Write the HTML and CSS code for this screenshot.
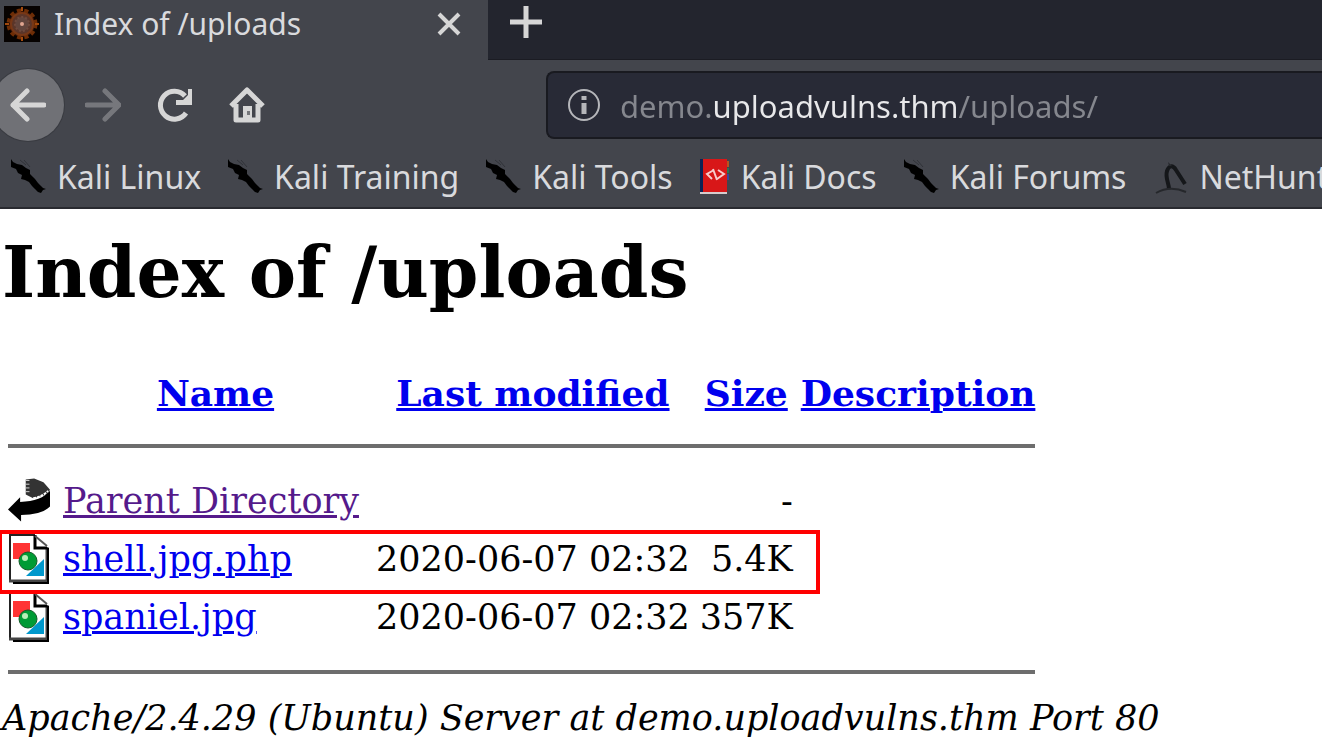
FILE: index.html
```html
<!DOCTYPE html>
<html lang="en">
<head>
    <meta charset="UTF-8">
    <meta name="viewport" content="width=device-width, initial-scale=1.0">
    <title>Index of /uploads</title>
    <link rel="stylesheet" href="styles.css">
</head>
<body>
    <!-- Shared icons -->
    <svg class="sprite" aria-hidden="true">
        <symbol id="dragon" viewBox="0 0 36 36">
            <path d="M1 0L3 3L7 5L12 6L16 9L20 11L20 15L23 18L25 20L28 24L31 27L33 29L36 30L33 31L31 34L28 33L25 30L22 27L19 23L15 21L11 20L12 16L8 14L6 10L1 8Z"/>
            <path d="M10 1L16 6M14 1L20 8" fill="none" stroke="#303238" stroke-width="1"/>
        </symbol>
        <symbol id="image-file" viewBox="0 0 42 50">
            <path d="M2 1 H27 L40 13 V48 H2Z" fill="#fff"/>
            <path d="M27 1 H2 V46" fill="none" stroke="#222" stroke-width="2"/>
            <path d="M1 47 H39 V13" fill="none" stroke="#444" stroke-width="3"/>
            <path d="M5 49 H40 V14" fill="none" stroke="#000" stroke-width="2"/>
            <path d="M27 1 V14 H39" fill="none" stroke="#000" stroke-width="3"/>
            <path d="M27 2 L39 12" fill="none" stroke="#555" stroke-width="2"/>
            <rect x="5" y="9" width="17" height="16" fill="#ff3434"/>
            <path d="M36 25 V42 H18Z" fill="#0098cc"/>
            <circle cx="20" cy="27" r="9" fill="#009b35" stroke="#155b2a" stroke-width="1"/>
            <circle cx="17" cy="24" r="3" fill="#b8eeb8"/>
        </symbol>
    </svg>

    <header class="browser">
        <div class="tab-bar">
            <div class="tab">
                <svg class="favicon" viewBox="0 0 36 36" aria-hidden="true">
                    <rect width="36" height="36" fill="#060201"/>
                    <circle cx="18" cy="18" r="13" fill="#3b1608" stroke="#6e2d06" stroke-width="5" stroke-dasharray="4 3"/>
                    <circle cx="18" cy="18" r="11" fill="#5a3529" stroke="#783817" stroke-width="2"/>
                    <circle cx="18" cy="18" r="7" fill="#62453d" stroke="#704a3d" stroke-width="2" stroke-dasharray="2 2"/>
                    <path d="M18 1v4M18 31v4M1 18h4M31 18h4" stroke="#a34a0d" stroke-width="2"/>
                    <circle cx="18" cy="18" r="2" fill="#e0a590"/>
                </svg>
                <span class="tab-title">Index of /uploads</span>
                <button class="tab-button" aria-label="Close tab">
                    <svg viewBox="0 0 24 24" width="24" height="24"><path d="M2 2L22 22M22 2L2 22" stroke-width="4"/></svg>
                </button>
            </div>
            <button class="tab-button new-tab" aria-label="New tab">
                <svg viewBox="0 0 32 32" width="32" height="32"><path d="M16 0V32M0 16H32" stroke-width="5"/></svg>
            </button>
        </div>

        <div class="nav-bar">
            <div class="nav-buttons">
                <button class="nav-button back" aria-label="Back">
                    <svg viewBox="0 0 36 36" width="36" height="36"><path d="M34 18H3M17 4L3 18L17 32" stroke-width="5" stroke-linecap="round" stroke-linejoin="round"/></svg>
                </button>
                <button class="nav-button forward" aria-label="Forward" disabled>
                    <svg viewBox="0 0 36 36" width="36" height="36"><path d="M2 18H34M20 4L34 18L20 32" stroke-width="5" stroke-linecap="round" stroke-linejoin="round"/></svg>
                </button>
                <button class="nav-button reload" aria-label="Reload">
                    <svg viewBox="0 0 36 36" width="36" height="36"><path d="M29 26A14 14 0 1 1 28 9" stroke-width="5"/><path d="M31 2H35V18H19V13H26L31 8Z" fill="#d6d6d6" stroke="none"/></svg>
                </button>
                <button class="nav-button home" aria-label="Home">
                    <svg viewBox="0 0 36 36" width="36" height="36"><path d="M2 19L18 3L34 19M7 17V33H29V17" stroke-width="5" stroke-linejoin="round"/><path d="M14 19H23V33H14Z" fill="#d6d6d6" stroke="none"/><rect x="18" y="24" width="3" height="4" fill="#75767a" stroke="none"/></svg>
                </button>
            </div>
            <div class="url-bar">
                <svg class="info" viewBox="0 0 32 32" aria-hidden="true">
                    <circle cx="16" cy="16" r="15" fill="none" stroke="#b5b6ba" stroke-width="2"/>
                    <path d="M16 7V11M16 14V25" stroke="#b5b6ba" stroke-width="5"/>
                </svg>
                <input class="url" type="text" aria-label="Address" value="demo.uploadvulns.thm/uploads/">
            </div>
        </div>

        <nav class="bookmarks">
            <a href="#"><svg class="bookmark-icon"><use href="#dragon"/></svg>Kali Linux</a>
            <a href="#"><svg class="bookmark-icon"><use href="#dragon"/></svg>Kali Training</a>
            <a href="#"><svg class="bookmark-icon"><use href="#dragon"/></svg>Kali Tools</a>
            <a href="#"><svg class="bookmark-icon docs" viewBox="0 0 29 36">
                <rect width="4" height="33" fill="#0b2355"/>
                <rect x="3" width="24" height="33" fill="#d81718"/>
                <path d="M27 2h2v6h-2z" fill="#b65420"/><path d="M27 9h2v5h-2z" fill="#277654"/><path d="M27 15h2v6h-2z" fill="#39479a"/>
                <rect y="33" width="27" height="2" fill="#d6cccd"/>
                <path d="M14 11L7 15L12 20M13 10L17 21M18 11L24 15L17 20" fill="none" stroke="#f8cccc" stroke-width="2"/>
            </svg>Kali Docs</a>
            <a href="#"><svg class="bookmark-icon"><use href="#dragon"/></svg>Kali Forums</a>
            <a href="#"><svg class="bookmark-icon nethunter" viewBox="0 0 36 36">
                <path d="M17 30C17 24 13 19 15 12C17 6 21 6 24 11L33 25" fill="none" stroke="#15171a" stroke-width="4"/>
                <path d="M4 34Q18 26 34 33" fill="none" stroke="#25272b" stroke-width="2"/>
                <path d="M17 7L16 3L20 7" fill="#25272b"/>
            </svg>NetHunter</a>
        </nav>
    </header>

    <main class="listing">
        <h1>Index of /uploads</h1>
        <table>
            <thead>
                <tr>
                    <th class="icon-cell"></th>
                    <th class="name"><a href="#">Name</a></th>
                    <th><a href="#">Last modified</a></th>
                    <th class="size-head"><a href="#">Size</a></th>
                    <th><a href="#">Description</a></th>
                </tr>
            </thead>
            <tbody>
                <tr class="rule"><td colspan="5"><hr></td></tr>
                <tr>
                    <td class="icon-cell">
                        <svg class="file-icon" viewBox="0 0 45 50" role="img" aria-label="Parent directory">
                            <path d="M19 2L28 1L38 5L45 13L42 18L27 22L19 18Z" fill="#333"/>
                            <path d="M19 3h4M19 7h4M19 11h4M19 15h4" stroke="#ddd" stroke-width="1"/>
                            <path d="M27 22Q38 20 43 14" fill="none" stroke="#fff" stroke-width="2" stroke-dasharray="3 1"/>
                            <path d="M0 34L13 21V26Q36 25 45 14V31Q36 40 14 40V47Z" fill="#000"/>
                        </svg>
                    </td>
                    <td><a class="visited" href="#">Parent Directory</a></td>
                    <td></td>
                    <td class="size">-</td>
                    <td></td>
                </tr>
                <tr class="highlight">
                    <td class="icon-cell"><svg class="file-icon"><use href="#image-file"/></svg></td>
                    <td><a href="#">shell.jpg.php</a></td>
                    <td class="date">2020-06-07 02:32</td>
                    <td class="size">5.4K</td>
                    <td></td>
                </tr>
                <tr>
                    <td class="icon-cell"><svg class="file-icon"><use href="#image-file"/></svg></td>
                    <td><a href="#">spaniel.jpg</a></td>
                    <td class="date">2020-06-07 02:32</td>
                    <td class="size">357K</td>
                    <td></td>
                </tr>
                <tr class="rule"><td colspan="5"><hr></td></tr>
            </tbody>
        </table>
        <address>Apache/2.4.29 (Ubuntu) Server at demo.uploadvulns.thm Port 80</address>
    </main>
</body>
</html>
```
FILE: styles.css
```css
* {
    box-sizing: border-box;
}
body {
    margin: 0;
    background: #fff;
    color: #000;
    overflow-x: hidden;
}
button {
    padding: 0;
    border: none;
    background: none;
}
svg {
    display: block;
    flex-shrink: 0;
}
.sprite {
    position: absolute;
    width: 0;
    height: 0;
}

/* Browser chrome */
.browser {
    background: #43454c;
    color: #d9dadd;
    font-family: "Noto Sans", sans-serif;
    font-size: 32px;
    border-bottom: 2px solid #292a30;
}
.tab-bar {
    display: flex;
    height: 60px;
    background: #23252e;
    border-bottom: 1px solid #1b1c23;
}
.tab {
    display: flex;
    align-items: center;
    width: 488px;
    height: 60px;
    padding: 0 27px 12px 4px;
    background: #43454c;
}
.favicon {
    width: 36px;
    height: 36px;
    margin-right: 14px;
}
.tab-title {
    flex: 1;
    font-size: 30px;
    line-height: 48px;
    white-space: nowrap;
}
.tab-button svg,
.nav-button svg {
    fill: none;
    stroke: #d6d6d6;
}
.new-tab {
    height: 44px;
    margin-left: 22px;
}
.nav-bar {
    display: flex;
    align-items: center;
    height: 90px;
}
.nav-buttons {
    display: flex;
    align-items: center;
    flex-shrink: 0;
    width: 546px;
    gap: 36px;
}
.back {
    display: flex;
    align-items: center;
    justify-content: center;
    width: 72px;
    height: 72px;
    margin: 0 -15px 0 -8px;
    border-radius: 50%;
    background: #707176;
    box-shadow: 0 0 0 1px #393b41;
}
.forward {
    opacity: 0.35;
}
.url-bar {
    display: flex;
    align-items: center;
    flex: 1;
    height: 68px;
    padding-left: 20px;
    gap: 20px;
    background: #282a36;
    border: 2px solid #191a20;
    border-right: none;
    border-radius: 8px 0 0 8px;
}
.info {
    width: 32px;
    height: 32px;
}
.url {
    flex: 1;
    min-width: 0;
    padding: 2px 0 0;
    border: none;
    outline: none;
    font: inherit;
    font-size: 31px;
    /* dim the subdomain and the path, keep the domain bright */
    background: linear-gradient(90deg, #85878e 92px, #e8e8ea 92px, #e8e8ea 337px, #85878e 337px);
    background-clip: text;
    -webkit-background-clip: text;
    color: transparent;
}
.bookmarks {
    display: flex;
    height: 57px;
    padding: 0 0 4px 10px;
    gap: 26px;
    overflow: hidden;
    white-space: nowrap;
}
.bookmarks a {
    display: flex;
    align-items: center;
    gap: 11px;
    color: inherit;
    text-decoration: none;
}
.bookmark-icon {
    width: 36px;
    height: 36px;
}
.docs {
    width: 31px;
}

/* Directory listing */
.listing {
    font-family: "DejaVu Serif", serif;
    font-size: 35px;
    padding-left: 2px;
}
h1 {
    margin: 22px 0 53px;
    font-size: 71px;
    line-height: 82px;
}
table {
    border-spacing: 4px 0;
}
th,
td {
    height: 58px;
    padding: 2px;
    line-height: 42px;
    white-space: nowrap;
}
th {
    height: 54px;
    font-size: 36px;
}
.icon-cell {
    width: 51px;
}
.name {
    width: 309px;
}
.file-icon {
    width: 42px;
    height: 50px;
}
.date,
.size {
    text-align: right;
}
.size,
.size-head {
    padding-left: 4px;
}
.rule td {
    height: 52px;
}
hr {
    height: 4px;
    margin: 0;
    border: none;
    background: #6d6d6d;
}
a {
    color: #0000ee;
}
.visited {
    color: #551a8b;
}
.highlight {
    position: relative;
}
/* red frame around the uploaded shell */
.highlight::after {
    content: "";
    position: absolute;
    top: 0;
    bottom: -6px;
    left: -8px;
    right: 221px;
    border: 4px solid #ff0000;
}
address {
    line-height: 41px;
    white-space: nowrap;
}
```
